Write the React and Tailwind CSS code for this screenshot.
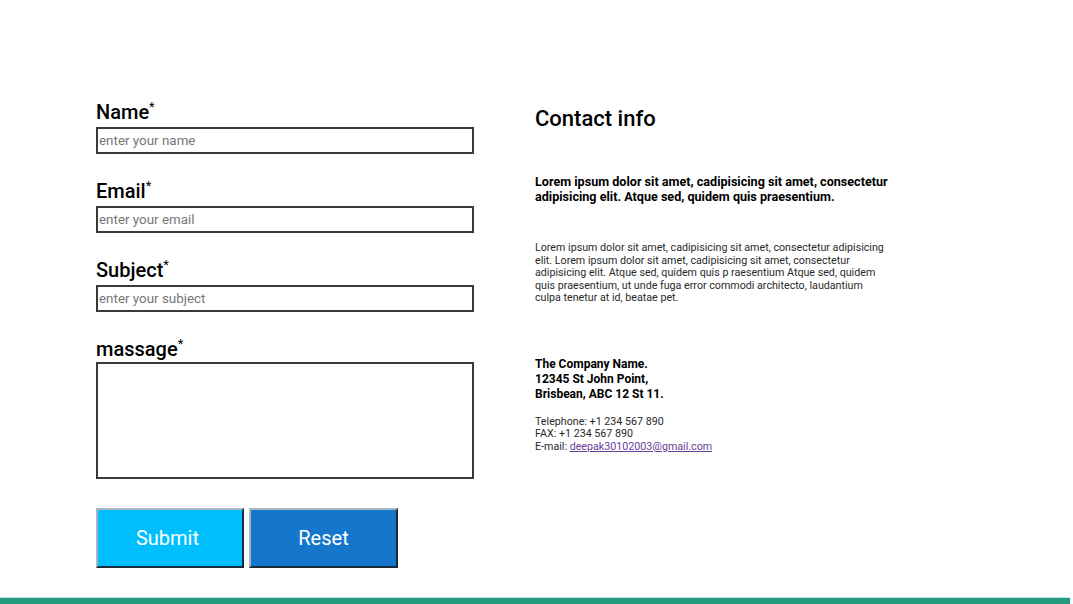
export default function App() {
  const fields = [
    { label: 'Name', placeholder: 'enter your name' },
    { label: 'Email', placeholder: 'enter your email' },
    { label: 'Subject', placeholder: 'enter your subject' },
  ]

  return (
    <div className="flex h-[604px] flex-col bg-white font-['Roboto',sans-serif] text-black">
      <div className="flex flex-1 pl-[96px]">
        {/* form */}
        <form className="w-[378px] pt-[100px]" onSubmit={e => e.preventDefault()}>
          {fields.map((f, i) => (
            <div key={i} className="mb-[25px]">
              <label className="block h-[24px] text-[20px] font-medium leading-[24px]">
                {f.label}<span className="relative -top-[8px] text-[13px] font-normal leading-none">*</span>
              </label>
              <input
                type="text"
                placeholder={f.placeholder}
                className="mt-[3px] block h-[27px] w-[378px] border-2 border-[#3a3a3a] px-[1px] text-[13.4px] outline-none placeholder:text-[#777]"
              />
            </div>
          ))}
          <div>
            <label className="block h-[24px] text-[20px] font-medium leading-[24px]">
              massage<span className="relative -top-[8px] text-[13px] font-normal leading-none">*</span>
            </label>
            <textarea className="mt-[1px] block h-[117px] w-[378px] resize-none border-2 border-[#3a3a3a] outline-none" />
          </div>
          <div className="mt-[29px] flex gap-[5px]">
            <button type="submit" className="h-[60px] w-[148px] border-2 border-t-[#a7b6c0] border-l-[#a7b6c0] border-r-[#1b2b38] border-b-[#1b2b38] bg-[#00bfff] pr-[5px] text-[20px] text-white">
              Submit
            </button>
            <button type="reset" className="h-[60px] w-[149px] border-2 border-t-[#a7b6c0] border-l-[#a7b6c0] border-r-[#1b2b38] border-b-[#1b2b38] bg-[#1477cc] text-[20px] text-white">
              Reset
            </button>
          </div>
        </form>

        {/* contact info */}
        <div className="ml-[61px] w-[356px] pt-[106px]">
          <h2 className="text-[22px] font-medium leading-[26px]">Contact info</h2>
          <p className="mt-[42px] text-[12.6px] font-bold leading-[15px]">
            Lorem ipsum dolor sit amet, cadipisicing sit amet, consectetur adipisicing elit. Atque sed, quidem quis praesentium.
          </p>
          <p className="mt-[38px] text-[10.7px] leading-[12.5px] text-[#2a2a2a]">
            Lorem ipsum dolor sit amet, cadipisicing sit amet, consectetur adipisicing elit. Lorem ipsum dolor sit amet, cadipisicing sit amet, consectetur adipisicing elit. Atque sed, quidem quis p raesentium Atque sed, quidem quis praesentium, ut unde fuga error commodi architecto, laudantium culpa tenetur at id, beatae pet.
          </p>
          <p className="mt-[52px] text-[12px] font-bold leading-[15px]">
            The Company Name.<br />
            12345 St John Point,<br />
            Brisbean, ABC 12 St 11.
          </p>
          <p className="mt-[14px] text-[10.7px] leading-[12.5px] text-[#2a2a2a]">
            Telephone: +1 234 567 890<br />
            FAX: +1 234 567 890<br />
            E-mail: <a href="#" className="text-[#6a3d9a] underline">deepak30102003@gmail.com</a>
          </p>
        </div>
      </div>

      <div className="h-[7px] w-[1070px] border-t border-[#bfe8df] bg-[#259b7e]" />
    </div>
  )
}
